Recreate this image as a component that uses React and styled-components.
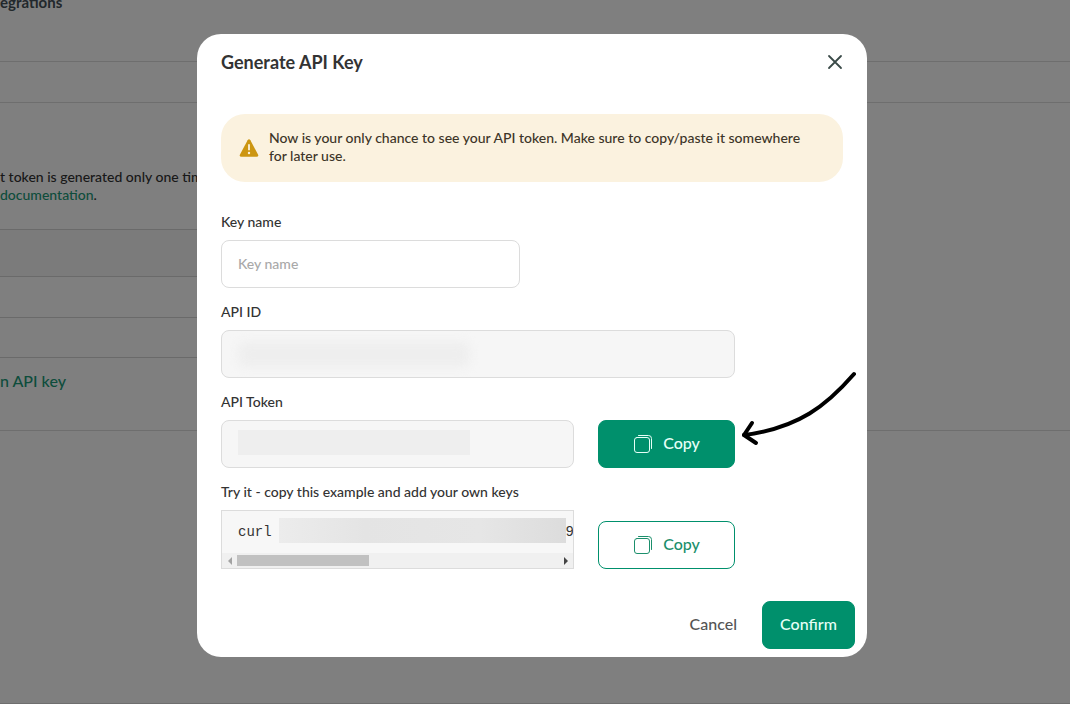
import React from "react";
import styled, { createGlobalStyle, css } from "styled-components";

const GlobalStyle = createGlobalStyle`
  *, *::before, *::after { box-sizing: border-box; }
  body {
    margin: 0;
    background: #ffffff;
    color: #333333;
    font: 500 14px/18px Lato, "Open Sans", sans-serif;
  }
  button, input { font: inherit; }
`;

/* ---------- page behind the dialog ---------- */

const Page = styled.div`
  min-height: 100vh;
  overflow: hidden;
  border-bottom: 1px solid #dcdcdc;
`;

const PageTitle = styled.h1`
  margin: 0;
  height: 61px;
  font-size: 15px;
  line-height: 4px;
  font-weight: 700;
  color: #445058;
`;

const TabStrip = styled.nav`
  height: 42px;
  border: solid #dcdcdc;
  border-width: 1px 0;
`;

const Settings = styled.section`
  height: 328px;
  padding-top: 65px;
  border-bottom: 1px solid #dcdcdc;
`;

const Intro = styled.p`
  margin: 0 0 25px;
  white-space: nowrap;
  font-size: 14px;
`;

const PageLink = styled.a`
  color: #1a9a78;
  text-decoration: none;
`;

const KeyList = styled.div`
  width: 50%;
  border-top: 1px solid #d4d4d4;
`;

const KeyRow = styled.div`
  height: ${(p) => p.$height}px;
  border-bottom: 1px solid #d4d4d4;
  background: ${(p) => (p.$head ? "#f6f6f6" : "transparent")};
`;

const AddKey = styled(PageLink)`
  display: inline-block;
  margin-top: 14px;
  font-size: 16px;
`;

/* ---------- dialog ---------- */

const Backdrop = styled.div`
  position: fixed;
  inset: 0;
  display: flex;
  justify-content: center;
  align-items: flex-start;
  padding: 34px 6px 34px 0;
  overflow: auto;
  background: rgba(0, 0, 0, 0.5);
`;

const Dialog = styled.div`
  width: 100%;
  max-width: 670px;
  padding: 16px 24px 8px;
  border-radius: 24px;
  background: #ffffff;
`;

const Header = styled.header`
  display: flex;
  align-items: center;
  justify-content: space-between;
  height: 24px;
  margin-bottom: 40px;
`;

const Title = styled.h2`
  margin: 0;
  font-size: 18px;
  line-height: 24px;
  font-weight: 700;
`;

const CloseButton = styled.button`
  display: flex;
  padding: 0;
  border: 0;
  background: none;
  color: #3a4a48;
  cursor: pointer;
`;

const Alert = styled.div`
  display: flex;
  align-items: center;
  gap: 10px;
  min-height: 68px;
  margin-bottom: 32px;
  padding: 15px 32px 15px 18px;
  border-radius: 24px;
  background: #fbf2df;
  color: #3d3528;

  svg { flex: none; }
  p { margin: 0; padding-bottom: 2px; }
`;

const Form = styled.form`
  display: flex;
  flex-direction: column;
  gap: 16px;
`;

const Field = styled.div`
  display: flex;
  flex-direction: column;
  gap: 10px;
`;

const Label = styled.label`
  line-height: 16px;
`;

const Row = styled.div`
  position: relative;
  display: flex;
  align-items: flex-end;
  gap: 24px;
  width: 100%;
  max-width: 514px;
`;

const InputBox = styled.div`
  position: relative;
  flex: 1;
  min-width: 0;
  max-width: ${(p) => p.$max || "none"};
`;

const Input = styled.input`
  display: block;
  width: 100%;
  height: 48px;
  padding: 0 16px 2px;
  border: 1px solid #dcdcdc;
  border-radius: 8px;
  background: ${(p) => (p.readOnly ? "#f6f6f6" : "#ffffff")};
  color: #333333;
  outline: 0;

  &::placeholder { color: #a9a9a9; opacity: 1; }
`;

const Mask = styled.span`
  position: absolute;
  top: 10px;
  left: 17px;
  width: 232px;
  height: 25px;
  background: #eeeeee;
  ${(p) => p.$soft && css`
    top: 12px;
    border-radius: 8px;
    filter: blur(5px);
  `}
`;

const Button = styled.button`
  display: flex;
  align-items: center;
  justify-content: center;
  flex: none;
  gap: 10px;
  min-width: 80px;
  height: 48px;
  padding: 0 16px 2px;
  border: 1px solid ${(p) => (p.$kind === "text" ? "transparent" : "#00906c")};
  border-radius: 8px;
  background: ${(p) => (p.$kind === "solid" ? "#00906c" : "transparent")};
  color: ${(p) => ({ solid: "#e6fff7", outline: "#1c8f6c", text: "#555555" })[p.$kind]};
  font-size: 16px;
  line-height: 24px;
  font-weight: 500;
  cursor: pointer;
`;

const CopyButton = styled(Button)`
  width: 137px;
`;

const ConfirmButton = styled(Button)`
  min-width: 93px;
`;

const Arrow = styled.svg`
  position: absolute;
  left: 518px;
  top: -52px;
  pointer-events: none;
`;

const CodeBox = styled.div`
  flex: 1;
  min-width: 0;
  border: 1px solid #dcdcdc;
  background: #f7f7f7;
  overflow: hidden;
`;

const Code = styled.pre`
  display: flex;
  align-items: center;
  height: 42px;
  margin: 0;
  padding-left: 16px;
  font: 14px/18px "Liberation Mono", monospace;
`;

const CodeMask = styled.span`
  flex: none;
  width: 287px;
  height: 25px;
  margin: 0 0 4px 7px;
  background: linear-gradient(90deg, #ececec, #e4e4e4 30%, #e6e6e6 70%, #dcdcdc);
`;

const ScrollBar = styled.div`
  display: flex;
  align-items: center;
  height: 15px;
  background: #f0f0f0;
`;

const ScrollTrack = styled.div`
  flex: 1;
`;

const ScrollThumb = styled.div`
  width: 41%;
  height: 11px;
  background: #c1c1c1;
`;

const ScrollArrow = styled.button`
  display: flex;
  align-items: center;
  justify-content: center;
  width: 15px;
  height: 15px;
  padding: 0;
  border: 0;
  background: none;
  color: ${(p) => (p.disabled ? "#a3a3a3" : "#444444")};
`;

const Footer = styled.footer`
  display: flex;
  justify-content: flex-end;
  gap: 8px;
  margin: 16px -12px 0 0;
`;

const CloseIcon = () => (
  <svg width="16" height="16" viewBox="0 0 16 16" fill="none" stroke="currentColor" strokeWidth="1.8" strokeLinecap="round" aria-hidden="true">
    <path d="M2 2 14 14M14 2 2 14" />
  </svg>
);

const WarningIcon = () => (
  <svg width="20" height="18" viewBox="0 0 20 18" aria-hidden="true">
    <path d="M8.6 1.2Q10-.6 11.4 1.2L19 15.4Q19.9 17.7 17.6 17.8H2.4Q.1 17.7 1 15.4Z" fill="#cc9612" />
    <path d="M10 5.2v6" stroke="#fbf2df" strokeWidth="1.8" />
    <circle cx="10" cy="14" r="1.2" fill="#fbf2df" />
  </svg>
);

const CopyIcon = () => (
  <svg width="20" height="20" viewBox="0 0 20 20" fill="none" stroke="currentColor" strokeWidth="1" strokeLinecap="round" aria-hidden="true">
    <rect x="1.5" y="4.5" width="15" height="15" rx="2.5" />
    <path d="M5.5 2.5h10a3 3 0 0 1 3 3V15.5" />
  </svg>
);

const Triangle = ({ d }) => (
  <svg width="4" height="8" viewBox="0 0 4 8" fill="currentColor" aria-hidden="true">
    <path d={d} />
  </svg>
);

export default function App() {
  return (
    <>
      <GlobalStyle />
      <Page>
        <PageTitle>egrations</PageTitle>
        <TabStrip />
        <Settings>
          <Intro>
            t token is generated only one time
            <br />
            <PageLink href="#docs">documentation</PageLink>.
          </Intro>
          <KeyList>
            <KeyRow $head $height={47} />
            <KeyRow $height={41} />
            <KeyRow $height={40} />
          </KeyList>
          <AddKey href="#new">n API key</AddKey>
        </Settings>
      </Page>

      <Backdrop>
        <Dialog role="dialog" aria-modal="true" aria-labelledby="dialog-title">
          <Header>
            <Title id="dialog-title">Generate API Key</Title>
            <CloseButton type="button" aria-label="Close">
              <CloseIcon />
            </CloseButton>
          </Header>

          <Alert role="alert">
            <WarningIcon />
            <p>Now is your only chance to see your API token. Make sure to copy/paste it somewhere for later use.</p>
          </Alert>

          <Form onSubmit={(e) => e.preventDefault()}>
            <Field>
              <Label htmlFor="key-name">Key name</Label>
              <InputBox $max="299px">
                <Input id="key-name" placeholder="Key name" />
              </InputBox>
            </Field>

            <Field>
              <Label htmlFor="api-id">API ID</Label>
              <InputBox $max="514px">
                <Input id="api-id" readOnly />
                <Mask $soft />
              </InputBox>
            </Field>

            <Field>
              <Label htmlFor="api-token">API Token</Label>
              <Row>
                <InputBox>
                  <Input id="api-token" readOnly />
                  <Mask />
                </InputBox>
                <CopyButton type="button" $kind="solid">
                  <CopyIcon />
                  Copy
                </CopyButton>
                <Arrow width="122" height="80" viewBox="0 0 122 80" fill="none" stroke="#000" strokeWidth="4" strokeLinecap="round" strokeLinejoin="round" aria-hidden="true">
                  <path d="M115 6C88 37 60 60 5 67" />
                  <path d="M13 55 5 67 17 75" />
                </Arrow>
              </Row>
            </Field>

            <Field role="group" aria-labelledby="example-label">
              <Label as="span" id="example-label">Try it - copy this example and add your own keys</Label>
              <Row>
                <CodeBox>
                  <Code>
                    curl
                    <CodeMask />
                    9
                  </Code>
                  <ScrollBar>
                    <ScrollArrow type="button" disabled aria-label="Scroll left">
                      <Triangle d="M4 0v8L0 4z" />
                    </ScrollArrow>
                    <ScrollTrack>
                      <ScrollThumb />
                    </ScrollTrack>
                    <ScrollArrow type="button" aria-label="Scroll right">
                      <Triangle d="M0 0v8l4-4z" />
                    </ScrollArrow>
                  </ScrollBar>
                </CodeBox>
                <CopyButton type="button" $kind="outline">
                  <CopyIcon />
                  Copy
                </CopyButton>
              </Row>
            </Field>

            <Footer>
              <Button type="button" $kind="text">Cancel</Button>
              <ConfirmButton type="submit" $kind="solid">Confirm</ConfirmButton>
            </Footer>
          </Form>
        </Dialog>
      </Backdrop>
    </>
  );
}
